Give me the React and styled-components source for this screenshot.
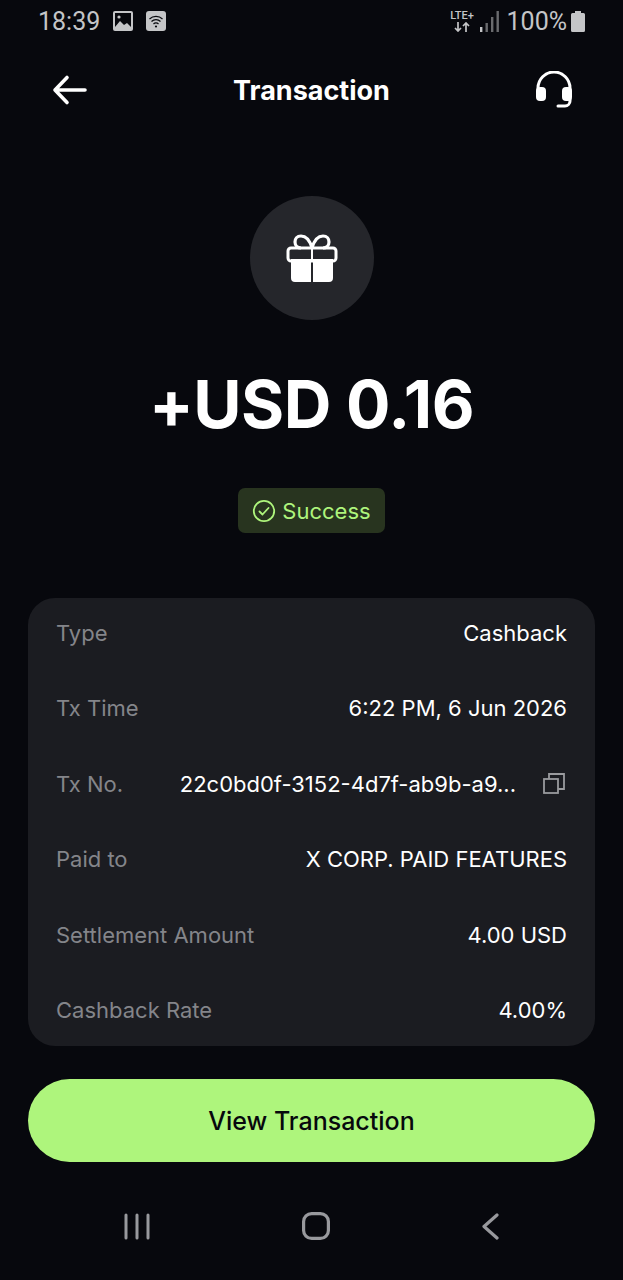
import React from 'react'
import styled, { createGlobalStyle } from 'styled-components'

const Global = createGlobalStyle`
  html, body { margin: 0; padding: 0; background: #07080d; }
  * { box-sizing: border-box; }
`

const Page = styled.div`
  width: 623px;
  height: 1280px;
  display: flex;
  flex-direction: column;
  background: #07080d;
  color: #fff;
  font-family: Inter, "Liberation Sans", sans-serif;
`

const StatusBar = styled.div`
  height: 42px;
  padding: 0 38px 0 38px;
  display: flex;
  align-items: center;
  justify-content: space-between;
  color: #c4c5c7;
  font-family: Roboto, "Liberation Sans", sans-serif;
  font-size: 25px;
`
const StatusGroup = styled.div`
  display: flex;
  align-items: center;
`
const StatusTime = styled.span`
  margin-right: 13px;
`
const StatusPercent = styled.span`
  margin: 0 4px 0 8px;
`
const Lte = styled.div`
  width: 25px;
  display: flex;
  flex-direction: column;
  align-items: center;
  margin-right: 5px;
`
const LteText = styled.span`
  font-family: Roboto, sans-serif;
  font-size: 11px;
  font-weight: 500;
  line-height: 12px;
`

const Header = styled.div`
  height: 96px;
  padding: 0 50px 0 52px;
  display: flex;
  align-items: center;
  justify-content: space-between;
`
const Title = styled.h1`
  margin: 0;
  font-size: 27px;
  font-weight: 700;
  letter-spacing: 0;
`

const Hero = styled.div`
  display: flex;
  flex-direction: column;
  align-items: center;
  padding-top: 58px;
`
const IconCircle = styled.div`
  width: 124px;
  height: 124px;
  border-radius: 50%;
  background: #25262b;
  display: flex;
  align-items: center;
  justify-content: center;
`
const Amount = styled.div`
  margin-top: 44px;
  font-size: 66px;
  font-weight: 700;
  line-height: 80px;
  letter-spacing: -0.5px;
`
const Badge = styled.div`
  margin-top: 44px;
  width: 147px;
  height: 45px;
  border-radius: 7px;
  background: #28341f;
  color: #aef57c;
  display: flex;
  align-items: center;
  justify-content: center;
  gap: 6px;
  font-size: 22px;
`

const Card = styled.div`
  margin: 65px 28px 0;
  height: 448px;
  border-radius: 27px;
  background: #1b1c21;
  padding: 21px 28px 0;
  display: flex;
  flex-direction: column;
  gap: 47.4px;
`
const Row = styled.div`
  height: 28px;
  display: flex;
  align-items: center;
  justify-content: space-between;
  font-size: 22px;
  line-height: 28px;
`
const Label = styled.span`
  color: #84858a;
`
const Value = styled.span`
  color: #fff;
`
const TxValue = styled.div`
  display: flex;
  align-items: center;
  gap: 27px;
  margin-right: 2px;
`

const PrimaryButton = styled.button`
  margin: 33px 28px 0;
  height: 83px;
  border: 0;
  border-radius: 42px;
  background: #aef57c;
  color: #07080d;
  font-family: inherit;
  font-size: 25px;
  font-weight: 500;
`

const NavBar = styled.div`
  margin-top: 50px;
  padding: 0 124px;
  display: flex;
  align-items: center;
  justify-content: space-between;
`

const BackArrow = () => (
  <svg width="36" height="36" viewBox="0 0 36 36" fill="none" stroke="#fff" strokeWidth="3.6" strokeLinecap="round" strokeLinejoin="round">
    <path d="M33 18H3M15 5.5 3 18l12 12.5" />
  </svg>
)

const Headset = () => (
  <svg width="38" height="38" viewBox="0 0 38 38" fill="none">
    <path d="M3 20v-3a16 16 0 0 1 32 0v3" stroke="#fff" strokeWidth="3" />
    <rect x="1" y="16" width="10" height="14" rx="4" fill="#fff" />
    <rect x="27" y="16" width="10" height="14" rx="4" fill="#fff" />
    <path d="M35 28v2a5 5 0 0 1-5 5h-7" stroke="#fff" strokeWidth="3" strokeLinecap="round" />
  </svg>
)

const Gift = () => (
  <svg width="52" height="50" viewBox="0 0 52 50" fill="none">
    <path d="M26 15c-2-7-6-12-11-12-4 0-6 3-6 6 0 4 3 6 6 6M26 15c2-7 6-12 11-12 4 0 6 3 6 6 0 4-3 6-6 6" stroke="#fff" strokeWidth="3.2" />
    <rect x="2" y="15" width="48" height="13" rx="3" stroke="#fff" strokeWidth="3" />
    <path d="M25 15v34" stroke="#25262b" strokeWidth="0" />
    <path d="M5 26h20v23H9a4 4 0 0 1-4-4zM27 26h20v19a4 4 0 0 1-4 4H27z" fill="#fff" />
    <rect x="25" y="15" width="2" height="13" fill="#fff" />
  </svg>
)

const CheckCircle = () => (
  <svg width="24" height="24" viewBox="0 0 24 24" fill="none" stroke="#aef57c" strokeWidth="1.8" strokeLinecap="round" strokeLinejoin="round">
    <circle cx="12" cy="12" r="10.2" />
    <path d="m7.5 12.5 3 3 6-6.5" />
  </svg>
)

const CopyIcon = () => (
  <svg width="22" height="22" viewBox="0 0 22 22" fill="none" stroke="#9a9b9e" strokeWidth="1.8">
    <rect x="1" y="6" width="14" height="14" />
    <path d="M6 6V1h15v15h-6" />
  </svg>
)

const PictureIcon = () => (
  <svg width="20" height="20" viewBox="0 0 20 20">
    <rect width="20" height="20" rx="2" fill="#c4c5c7" />
    <rect x="2" y="2" width="16" height="16" fill="#07080d" />
    <path d="M2 16l5-6 4 4 3-2 4 4v2H2z" fill="#c4c5c7" />
    <circle cx="6" cy="6" r="1.6" fill="#c4c5c7" />
  </svg>
)

const WifiTile = () => (
  <svg width="20" height="20" viewBox="0 0 20 20" fill="none">
    <rect width="20" height="20" rx="3" fill="#c4c5c7" />
    <path d="M3.5 8a9.5 9.5 0 0 1 13 0M5.5 10.5a6.5 6.5 0 0 1 9 0M7.5 13a3.5 3.5 0 0 1 5 0" stroke="#07080d" strokeWidth="1.2" />
    <circle cx="10" cy="15.5" r="1.1" fill="#07080d" />
  </svg>
)

const LteArrows = () => (
  <svg width="16" height="10" viewBox="0 0 16 10" fill="none" stroke="#c4c5c7" strokeWidth="1.7">
    <path d="M4 0v9M1 6l3 3 3-3M12 10V1M9 4l3-3 3 3" />
  </svg>
)

const Signal = () => (
  <svg width="19" height="21" viewBox="0 0 19 21" fill="#6a6b6e">
    <rect x="0" y="16" width="2.4" height="5" fill="#c4c5c7" />
    <rect x="5.5" y="12" width="2.4" height="9" />
    <rect x="11" y="6" width="2.4" height="15" />
    <rect x="16.5" y="0" width="2.4" height="21" />
  </svg>
)

const Battery = () => (
  <svg width="14" height="21" viewBox="0 0 14 21" fill="#c4c5c7">
    <path d="M4 0h6v2h2.5a1.5 1.5 0 0 1 1.5 1.5V19.5a1.5 1.5 0 0 1-1.5 1.5h-11A1.5 1.5 0 0 1 0 19.5V3.5A1.5 1.5 0 0 1 1.500 2H4z" />
  </svg>
)

const NavRecents = () => (
  <svg width="26" height="27" viewBox="0 0 26 27" stroke="#98999d" strokeWidth="3" strokeLinecap="round">
    <path d="M2 2v23M13 2v23M24 2v23" />
  </svg>
)
const NavHome = () => (
  <svg width="28" height="28" viewBox="0 0 28 28" fill="none" stroke="#98999d" strokeWidth="3.200">
    <rect x="1.6" y="1.600" width="24.8" height="24.8" rx="8" />
  </svg>
)
const NavBack = () => (
  <svg width="17" height="27" viewBox="0 0 17 27" fill="none" stroke="#98999d" strokeWidth="3.200" strokeLinecap="round" strokeLinejoin="round">
    <path d="M15 2 2 13.500 15 25" />
  </svg>
)

const rows = [
  ['Type', 'Cashback'],
  ['Tx Time', '6:22 PM, 6 Jun 2026'],
  ['Tx No.', '22c0bd0f-3152-4d7f-ab9b-a9...', true],
  ['Paid to', 'X CORP. PAID FEATURES'],
  ['Settlement Amount', '4.00 USD'],
  ['Cashback Rate', '4.00%'],
]

export default function App() {
  return (
    <Page>
      <Global />
      <StatusBar>
        <StatusGroup>
          <StatusTime>18:39</StatusTime>
          <PictureIcon />
          <span style={{ width: 13 }} />
          <WifiTile />
        </StatusGroup>
        <StatusGroup>
          <Lte>
            <LteText>LTE+</LteText>
            <LteArrows />
          </Lte>
          <Signal />
          <StatusPercent>100%</StatusPercent>
          <Battery />
        </StatusGroup>
      </StatusBar>
      <Header>
        <BackArrow />
        <Title>Transaction</Title>
        <Headset />
      </Header>
      <Hero>
        <IconCircle>
          <Gift />
        </IconCircle>
        <Amount>+USD 0.16</Amount>
        <Badge>
          <CheckCircle />
          Success
        </Badge>
      </Hero>
      <Card>
        {rows.map(([label, value, copy]) => (
          <Row key={label}>
            <Label>{label}</Label>
            {copy ? (
              <TxValue>
                <Value>{value}</Value>
                <CopyIcon />
              </TxValue>
            ) : (
              <Value>{value}</Value>
            )}
          </Row>
        ))}
      </Card>
      <PrimaryButton>View Transaction</PrimaryButton>
      <NavBar>
        <NavRecents />
        <NavHome />
        <NavBack />
      </NavBar>
    </Page>
  )
}
